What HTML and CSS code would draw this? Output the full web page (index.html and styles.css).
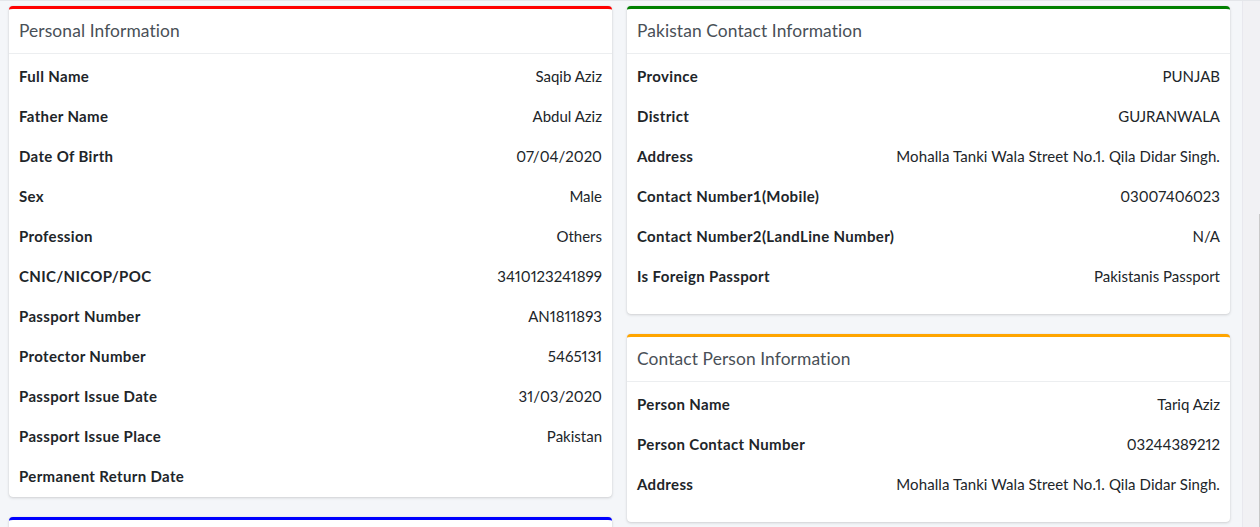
FILE: index.html
```html
<!DOCTYPE html>
<html>
<head>
<meta charset="utf-8">
<link rel="stylesheet" href="styles.css">
</head>
<body>
<div class="page">
  <div class="col">
    <section class="card card-red">
      <div class="card-header">Personal Information</div>
      <div class="card-body">
        <div class="row"><span class="label">Full Name</span><span class="value">Saqib Aziz</span></div>
        <div class="row"><span class="label">Father Name</span><span class="value">Abdul Aziz</span></div>
        <div class="row"><span class="label">Date Of Birth</span><span class="value">07/04/2020</span></div>
        <div class="row"><span class="label">Sex</span><span class="value">Male</span></div>
        <div class="row"><span class="label">Profession</span><span class="value">Others</span></div>
        <div class="row"><span class="label">CNIC/NICOP/POC</span><span class="value">3410123241899</span></div>
        <div class="row"><span class="label">Passport Number</span><span class="value">AN1811893</span></div>
        <div class="row"><span class="label">Protector Number</span><span class="value">5465131</span></div>
        <div class="row"><span class="label">Passport Issue Date</span><span class="value">31/03/2020</span></div>
        <div class="row"><span class="label">Passport Issue Place</span><span class="value">Pakistan</span></div>
        <div class="row"><span class="label">Permanent Return Date</span><span class="value"></span></div>
      </div>
    </section>
    <section class="card card-blue">
      <div class="card-header"></div>
    </section>
  </div>
  <div class="col">
    <section class="card card-green">
      <div class="card-header">Pakistan Contact Information</div>
      <div class="card-body card-body-spaced">
        <div class="row"><span class="label">Province</span><span class="value">PUNJAB</span></div>
        <div class="row"><span class="label">District</span><span class="value">GUJRANWALA</span></div>
        <div class="row"><span class="label">Address</span><span class="value addr">Mohalla Tanki Wala Street No.1. Qila Didar Singh.</span></div>
        <div class="row"><span class="label">Contact Number1(Mobile)</span><span class="value">03007406023</span></div>
        <div class="row"><span class="label">Contact Number2(LandLine Number)</span><span class="value">N/A</span></div>
        <div class="row"><span class="label">Is Foreign Passport</span><span class="value">Pakistanis Passport</span></div>
      </div>
    </section>
    <section class="card card-orange">
      <div class="card-header">Contact Person Information</div>
      <div class="card-body card-body-spaced">
        <div class="row"><span class="label">Person Name</span><span class="value">Tariq Aziz</span></div>
        <div class="row"><span class="label">Person Contact Number</span><span class="value">03244389212</span></div>
        <div class="row"><span class="label">Address</span><span class="value addr">Mohalla Tanki Wala Street No.1. Qila Didar Singh.</span></div>
      </div>
    </section>
  </div>
</div>
<div class="scrollbar"><div class="thumb"></div></div>
</body>
</html>
```
FILE: styles.css
```css
html, body {
  margin: 0;
  padding: 0;
}
body {
  display: flex;
  height: 527px;
  overflow: hidden;
  background: #f4f6f9;
  font-family: "Lato", "Open Sans", sans-serif;
  color: #212529;
  border-top: 1px solid #e4e6ea;
  box-sizing: border-box;
}
.page {
  flex: 1;
  display: flex;
  align-items: flex-start;
  gap: 15px;
  padding: 5px 0 0 9px;
}
.col {
  width: 603px;
  display: flex;
  flex-direction: column;
  gap: 20px;
}
.card {
  background: #fff;
  border-radius: 4px;
  border-top: 3px solid;
  box-shadow: 0 0 1px rgba(0,0,0,.125), 0 1px 3px rgba(0,0,0,.15);
}
.card-red { border-top-color: #ff0000; }
.card-blue { border-top-color: #0000ff; }
.card-green { border-top-color: #008000; }
.card-orange { border-top-color: #ffa500; }
.card-header {
  height: 45px;
  box-sizing: border-box;
  display: flex;
  align-items: center;
  padding: 0 10px 2px;
  border-bottom: 1px solid #eceef0;
  font-size: 17.4px;
  color: #495057;
  letter-spacing: 0.1px;
}
.card-body {
  padding: 2px 10px 1px;
}
.card-body-spaced {
  padding-bottom: 18px;
}
.row {
  height: 40px;
  display: flex;
  align-items: center;
  justify-content: space-between;
  font-size: 15px;
}
.label {
  font-weight: 700;
  letter-spacing: 0.35px;
}
.value {
  font-variant-numeric: proportional-nums;
}
.addr {
  letter-spacing: 0.08px;
}
.scrollbar {
  width: 17px;
  background: #f1f1f4;
  border-left: 1px solid #e8e8ee;
  position: relative;
}
.thumb {
  position: absolute;
  right: 0;
  top: 213px;
  bottom: 0;
  width: 1px;
  background: #c8c8c8;
}
```
